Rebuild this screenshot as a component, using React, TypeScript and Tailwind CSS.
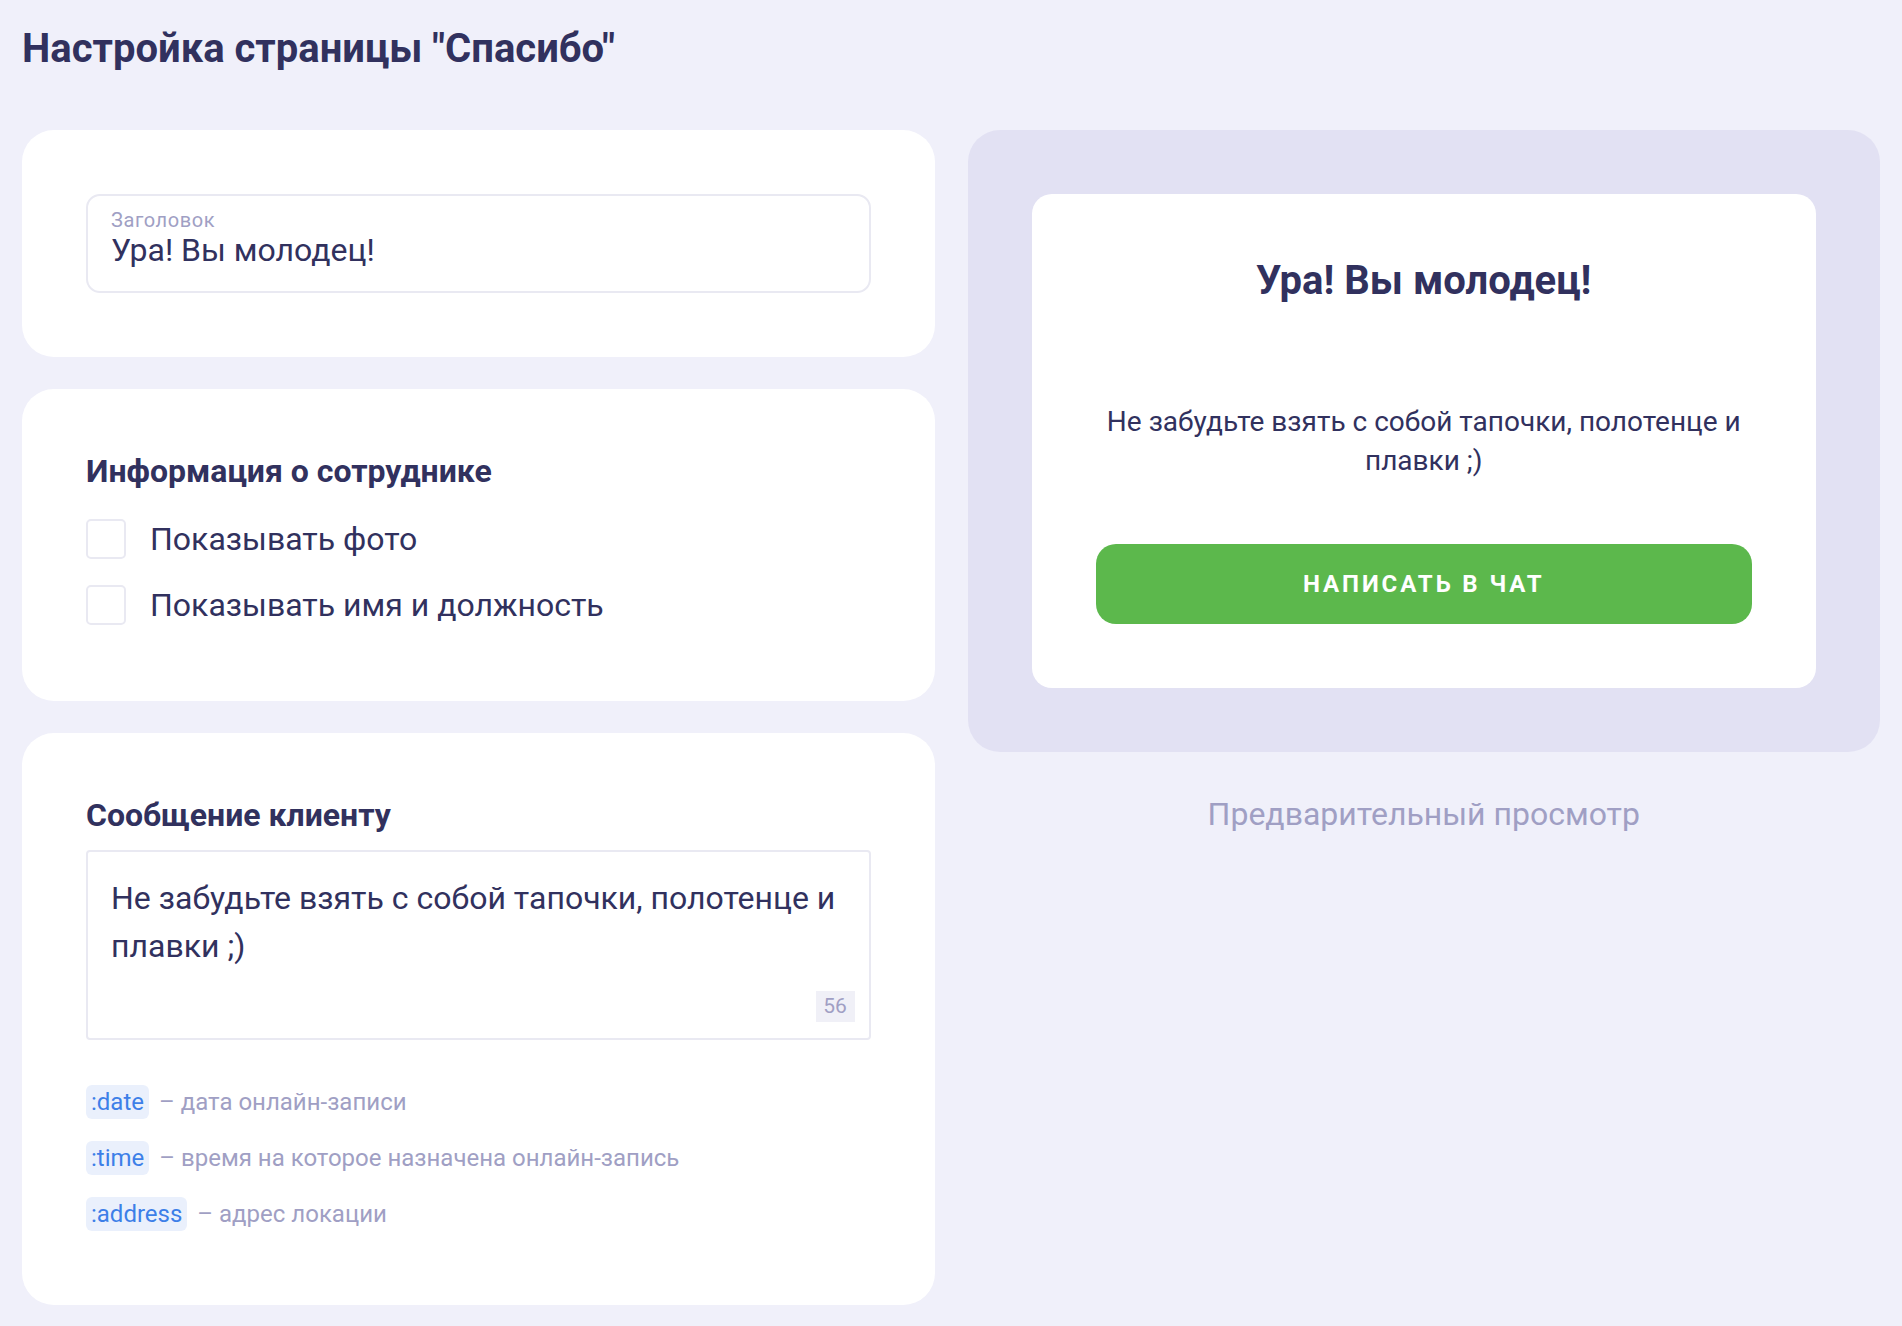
import { useState } from "react";

// Settings screen for the "thank you" page shown after an online booking.
// Left column edits the content, right column previews it live.

const VARS = [
  { tag: ":date", hint: "дата онлайн-записи" },
  { tag: ":time", hint: "время на которое назначена онлайн-запись" },
  { tag: ":address", hint: "адрес локации" },
];

function Checkbox({ label, checked, onChange }: { label: string; checked: boolean; onChange: () => void }) {
  return (
    <label className="flex h-10 cursor-pointer items-center gap-6">
      <span
        className={`flex h-10 w-10 shrink-0 items-center justify-center rounded-[5px] border-2 ${
          checked ? "border-[#5cb84c] bg-[#5cb84c]" : "border-[#e9e9f2] bg-white"
        }`}
      >
        {checked && (
          <svg viewBox="0 0 24 24" className="h-6 w-6" fill="none" stroke="white" strokeWidth={3}>
            <path d="M5 12.5l4.5 4.5L19 7.5" strokeLinecap="round" strokeLinejoin="round" />
          </svg>
        )}
      </span>
      <input type="checkbox" className="hidden" checked={checked} onChange={onChange} />
      <span className="text-[32px] leading-[40px]">{label}</span>
    </label>
  );
}

export default function App() {
  const [title, setTitle] = useState("Ура! Вы молодец!");
  const [message, setMessage] = useState("Не забудьте взять с собой тапочки, полотенце и плавки ;)");
  const [showPhoto, setShowPhoto] = useState(false);
  const [showName, setShowName] = useState(false);

  return (
    <div className="min-h-screen bg-[#f0f0fa] px-[22px] pb-5 pt-[25px] font-['Roboto','Liberation_Sans',sans-serif] text-[#31315e]">
      <h1 className="text-[40px] font-bold leading-[48px]">Настройка страницы "Спасибо"</h1>

      <div className="mt-[57px] grid grid-cols-2 items-start gap-[33px]">
        <div className="flex flex-col gap-8">
          <section className="rounded-[32px] bg-white p-16">
            <div className="h-[99px] rounded-[14px] border-2 border-[#e9e9f2] pl-[23px] pr-6 pt-[13px]">
              <div className="text-[20px] leading-[23px] tracking-[0.03em] text-[#a09fc4]">Заголовок</div>
              <input
                value={title}
                onChange={(e) => setTitle(e.target.value)}
                className="block w-full bg-transparent text-[32px] leading-[36px] text-[#31315e] outline-none"
              />
            </div>
          </section>

          <section className="rounded-[32px] bg-white px-16 pb-[76px] pt-[64px]">
            <h2 className="text-[32px] font-bold leading-[36px]">Информация о сотруднике</h2>
            <div className="mt-[30px] flex flex-col gap-[26px]">
              <Checkbox label="Показывать фото" checked={showPhoto} onChange={() => setShowPhoto(!showPhoto)} />
              <Checkbox
                label="Показывать имя и должность"
                checked={showName}
                onChange={() => setShowName(!showName)}
              />
            </div>
          </section>

          <section className="rounded-[32px] bg-white px-16 pb-[74px] pt-16">
            <h2 className="text-[32px] font-bold leading-[36px]">Сообщение клиенту</h2>
            <div className="relative mt-[17px] h-[190px] rounded-[4px] border-2 border-[#e9e9f2]">
              <textarea
                value={message}
                onChange={(e) => setMessage(e.target.value)}
                className="block h-full w-full resize-none bg-transparent pl-[23px] pr-6 pt-[22px] text-[32px] leading-[48px] text-[#31315e] outline-none"
              />
              <span className="absolute bottom-4 right-[14px] flex h-[31px] w-[39px] items-center justify-center bg-[#f0f0f7] text-[21px] text-[#a09fc4]">
                {message.length}
              </span>
            </div>
            <ul className="mt-[45px] flex flex-col gap-[22px]">
              {VARS.map((v) => (
                <li key={v.tag} className="flex h-[34px] items-center gap-[10px] text-[24px]">
                  <span className="flex h-[34px] items-center rounded-[6px] bg-[#eaf0fc] px-[5px] text-[#3d7fe8]">
                    {v.tag}
                  </span>
                  <span className="text-[#a09fc4]">– {v.hint}</span>
                </li>
              ))}
            </ul>
          </section>
        </div>

        <div>
          <div className="rounded-[32px] bg-[#e2e1f3] p-16">
            <div className="rounded-[20px] bg-white p-16 text-center">
              <div className="text-[40px] font-bold leading-[46px]">{title}</div>
              <p className="mx-auto mt-[98px] max-w-[680px] text-[28px] leading-[39px]">{message}</p>
              <button className="mt-16 flex h-20 w-full items-center justify-center rounded-[20px] bg-[#5cb84c] text-[24px] font-bold uppercase tracking-[0.12em] text-white">
                Написать в чат
              </button>
            </div>
          </div>
          <div className="mt-10 text-center text-[32px] leading-[45px] text-[#a09fc4]">Предварительный просмотр</div>
        </div>
      </div>
    </div>
  );
}
